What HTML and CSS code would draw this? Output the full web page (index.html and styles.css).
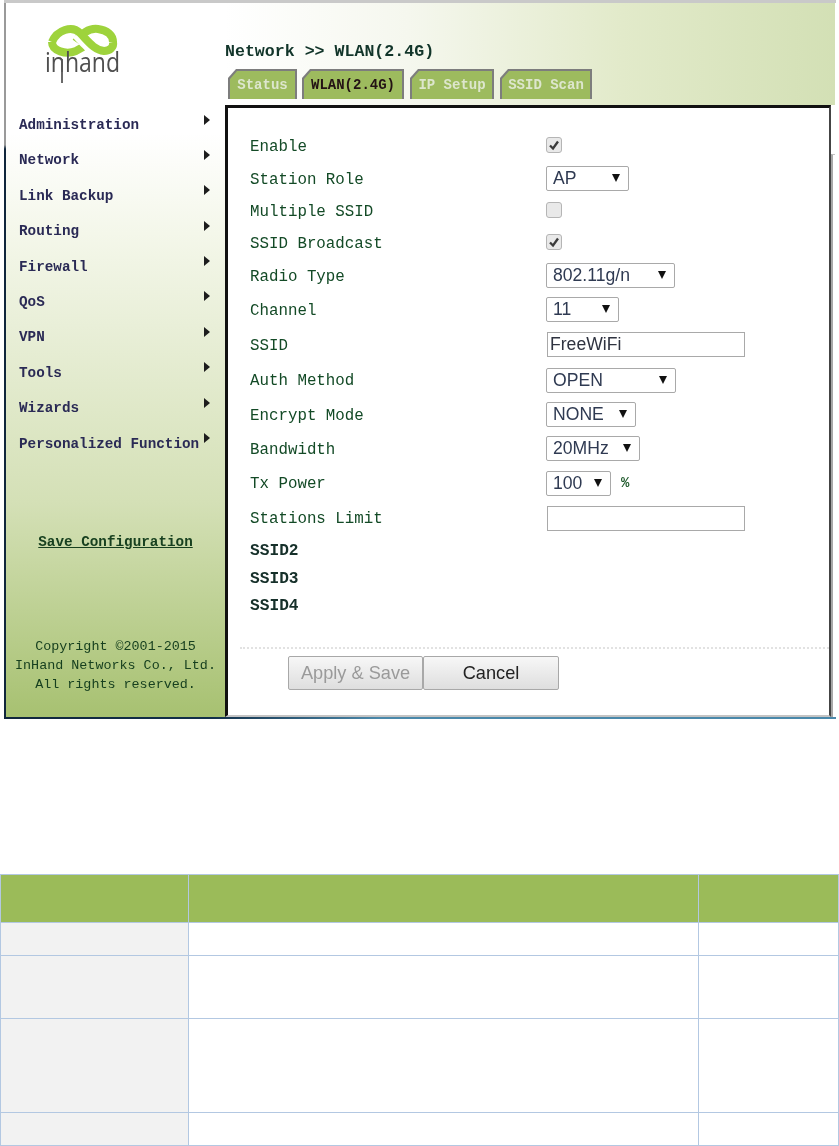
FILE: index.html
```html
<!DOCTYPE html>
<html lang="en">
<head>
<meta charset="utf-8">
<title>WLAN (2.4G)</title>
<link rel="stylesheet" href="styles.css">
</head>
<body>
<div class="frame">
  <aside class="side">
    <div class="logo">
      <svg class="logo-svg" viewBox="0 0 110 75" width="110" height="75">
        <path class="lg" d="M46 27C52 18 60 13 68 14C77 15 83 20 83 27"/>
        <path class="lg" d="M22 27C22 36 36 40 46 36L53 32"/>
        <path class="gap" d="M47 19C52 24 56 30 62 33"/>
        <path class="lg" d="M22 27C27 15 42 10 50 18C58 26 64 35 74 36C80 36 84 32 83 27"/>
        <text class="wordmark" x="15" y="57" textLength="75" lengthAdjust="spacingAndGlyphs">inhand</text>
        <path class="desc" d="M32 44V68"/>
      </svg>
    </div>
    <nav class="nav">
      <a class="nav-item">Administration<i class="tri"></i></a>
      <a class="nav-item">Network<i class="tri"></i></a>
      <a class="nav-item">Link Backup<i class="tri"></i></a>
      <a class="nav-item">Routing<i class="tri"></i></a>
      <a class="nav-item">Firewall<i class="tri"></i></a>
      <a class="nav-item">QoS<i class="tri"></i></a>
      <a class="nav-item">VPN<i class="tri"></i></a>
      <a class="nav-item">Tools<i class="tri"></i></a>
      <a class="nav-item">Wizards<i class="tri"></i></a>
      <a class="nav-item">Personalized Function<i class="tri"></i></a>
    </nav>
    <a class="save">Save Configuration</a>
    <p class="copy">Copyright ©2001-2015<br>InHand Networks Co., Ltd.<br>All rights reserved.</p>
  </aside>
  <div class="main">
    <header class="head">
      <h1 class="crumb">Network &gt;&gt; WLAN(2.4G)</h1>
      <div class="tabs">
        <div class="tab t-status"><span>Status</span></div>
        <div class="tab t-wlan on"><span>WLAN(2.4G)</span></div>
        <div class="tab t-ip"><span>IP Setup</span></div>
        <div class="tab t-scan"><span>SSID Scan</span></div>
      </div>
    </header>
    <div class="body-row">
      <section class="panel">
        <div class="form">
          <label class="lbl">Enable</label>
          <div class="ctl"><span class="cb"><svg viewBox="0 0 16 16" width="16" height="16"><path d="M4 8.5l3 3 5-7" class="ck"/></svg></span></div>
          <label class="lbl">Station Role</label>
          <div class="ctl"><span class="sel w83">AP<i class="dn"></i></span></div>
          <label class="lbl">Multiple SSID</label>
          <div class="ctl"><span class="cb"></span></div>
          <label class="lbl">SSID Broadcast</label>
          <div class="ctl"><span class="cb"><svg viewBox="0 0 16 16" width="16" height="16"><path d="M4 8.5l3 3 5-7" class="ck"/></svg></span></div>
          <label class="lbl">Radio Type</label>
          <div class="ctl"><span class="sel w129">802.11g/n<i class="dn"></i></span></div>
          <label class="lbl">Channel</label>
          <div class="ctl"><span class="sel w73">11<i class="dn"></i></span></div>
          <label class="lbl">SSID</label>
          <div class="ctl"><input class="txt" type="text" value="FreeWiFi"></div>
          <label class="lbl">Auth Method</label>
          <div class="ctl"><span class="sel w130">OPEN<i class="dn"></i></span></div>
          <label class="lbl">Encrypt Mode</label>
          <div class="ctl"><span class="sel w90">NONE<i class="dn"></i></span></div>
          <label class="lbl">Bandwidth</label>
          <div class="ctl"><span class="sel w94">20MHz<i class="dn"></i></span></div>
          <label class="lbl">Tx Power</label>
          <div class="ctl"><span class="sel w65">100<i class="dn"></i></span><span class="pct">%</span></div>
          <label class="lbl">Stations Limit</label>
          <div class="ctl"><input class="txt" type="text"></div>
          <b class="sub">SSID2</b><span></span>
          <b class="sub">SSID3</b><span></span>
          <b class="sub">SSID4</b><span></span>
        </div>
        <div class="actions">
          <button class="btn dim" type="button">Apply &amp; Save</button>
          <button class="btn" type="button">Cancel</button>
        </div>
      </section>
      <div class="edge"></div>
    </div>
  </div>
</div>
<table class="grid">
  <colgroup><col class="c1"><col class="c2"><col class="c3"></colgroup>
  <tr class="r-h"><td></td><td></td><td></td></tr>
  <tr class="r1"><td class="k"></td><td></td><td></td></tr>
  <tr class="r2"><td class="k"></td><td></td><td></td></tr>
  <tr class="r3"><td class="k"></td><td></td><td></td></tr>
  <tr class="r1"><td class="k"></td><td></td><td></td></tr>
</table>
</body>
</html>
```
FILE: styles.css
```css
* { box-sizing: border-box; }
html, body { margin: 0; padding: 0; background: #fff; }
body { width: 839px; height: 1146px; overflow: hidden; font-family: "Liberation Mono", monospace; }

.frame {
  display: flex;
  width: 832px;
  height: 719px;
  margin-left: 4px;
  padding: 0 0 2px 2px;
  border-top: 3px solid #c9c9c9;
  background:
    linear-gradient(90deg, #10263c 0, #12304a 25%, #4a88aa 45%, #4a88aa 100%) left bottom / 100% 2px no-repeat,
    linear-gradient(180deg, #9a9a9a 0, #9a9a9a 142px, #10263c 146px, #10263c 100%) left top / 2px 100% no-repeat,
    #fff;
  filter: blur(0.4px);
}

/* sidebar */
.side {
  flex: none;
  width: 219px;
  display: flex;
  flex-direction: column;
  background: linear-gradient(180deg, #fff 0, #fff 130px, #f4f7ea 230px, #d4e0b6 500px, #a7c171 714px);
}
.logo { height: 105px; }
.logo-svg { display: block; margin: 12px 0 0 24px; }
.lg { fill: none; stroke: #9ed33c; stroke-width: 8; }
.gap { fill: none; stroke: #fff; stroke-width: 11; }
.wordmark { font-family: "Open Sans", sans-serif; font-size: 27px; font-weight: 400; fill: #4f4f4f; }
.desc { stroke: #5a5a5a; stroke-width: 1.8; fill: none; }

.nav { display: flex; flex-direction: column; }
.nav-item {
  position: relative;
  display: block;
  height: 35.4px;
  line-height: 35.4px;
  padding-left: 13px;
  font-size: 14.3px;
  font-weight: 700;
  color: #2a2a55;
  white-space: nowrap;
}
.tri {
  position: absolute;
  left: 198px;
  top: 6.5px;
  width: 0;
  height: 0;
  border-left: 6px solid #1d1d1d;
  border-top: 5px solid transparent;
  border-bottom: 5px solid transparent;
}
.save {
  display: block;
  margin-top: 71px;
  text-align: center;
  font-size: 14.3px;
  line-height: 18px;
  font-weight: 700;
  color: #17401f;
  text-decoration: underline;
  white-space: nowrap;
}
.copy {
  margin: 86px 0 0;
  text-align: center;
  font-size: 13.4px;
  line-height: 19px;
  color: #17401f;
  white-space: nowrap;
}

/* main */
.main { flex: none; width: 610px; display: flex; flex-direction: column; }
.head {
  height: 102px;
  padding: 39px 0 0 0;
  background: linear-gradient(90deg, #fff 0, #f5f7ee 30%, #e2eaca 65%, #d3e0b5 100%);
}
.crumb {
  margin: 0;
  font-size: 16.6px;
  line-height: 20px;
  font-weight: 700;
  color: #12352a;
  white-space: nowrap;
  font-family: "Liberation Mono", monospace;
}
.tabs { display: flex; margin: 7px 0 0 3px; }
.tab {
  height: 30px;
  padding: 2px 2px 0;
  background: #7d7d7d;
  clip-path: polygon(8px 0, 100% 0, 100% 100%, 0 100%, 0 9px);
}
.tab span {
  display: flex;
  align-items: center;
  justify-content: center;
  height: 100%;
  background: #9dbb5e;
  clip-path: polygon(7px 0, 100% 0, 100% 100%, 0 100%, 0 8px);
  font-size: 14px;
  font-weight: 700;
  color: #dde6cd;
  white-space: nowrap;
}
.tab.on span { color: #231214; }
.t-status { width: 69px; margin-right: 5px; }
.t-wlan { width: 102px; margin-right: 6px; }
.t-ip { width: 84px; margin-right: 6px; }
.t-scan { width: 92px; }

.body-row { flex: 1; display: flex; min-height: 0; }
.panel {
  flex: none;
  width: 606px;
  background: #fff;
  border-top: 3px solid #111;
  border-left: 3px solid #111;
  border-right: 2px solid #444;
  border-bottom: 2px solid #c4c4c4;
  padding-top: 22px;
}
.edge {
  flex: 1;
  margin-top: 49px;
  border-left: 2px solid #a8a8a8;
  border-top: 1px solid #c4c4c4;
}

.form {
  display: grid;
  grid-template-columns: 296px 1fr;
  grid-template-rows: 33px 33px 32px 32px 33.5px 34.5px 35.5px 35px 34px 34px 35px 35px 29px 26.5px 27px;
  padding-left: 22px;
  align-items: center;
}
.lbl { font-size: 15.8px; color: #134a26; white-space: nowrap; }
.sub { font-size: 16.2px; font-weight: 700; color: #16302a; }
.ctl { display: flex; align-items: center; margin-top: -2px; font-family: "Liberation Sans", Arial, sans-serif; }
.cb {
  display: block;
  width: 16px;
  height: 16px;
  border: 1px solid #b5b5b5;
  border-radius: 3px;
  background: #e9e9e9;
  position: relative;
  top: -1px;
}
.cb svg { display: block; margin: -1px; }
.ck { fill: none; stroke: #3b3b3b; stroke-width: 2.3; }
.sel {
  position: relative;
  display: block;
  height: 25px;
  line-height: 23px;
  padding-left: 6px;
  border: 1px solid #a9a9a9;
  border-radius: 2px;
  background: #fff;
  font-size: 17.6px;
  color: #2f3a52;
  white-space: nowrap;
}
.dn {
  position: absolute;
  right: 8px;
  top: 7px;
  width: 0;
  height: 0;
  border-top: 8px solid #111;
  border-left: 4px solid transparent;
  border-right: 4px solid transparent;
}
.w65 { width: 65px; } .w73 { width: 73px; } .w83 { width: 83px; } .w90 { width: 90px; }
.w94 { width: 94px; } .w129 { width: 129px; } .w130 { width: 130px; }
.pct { margin-left: 10px; font-family: "Liberation Mono", monospace; font-size: 14px; font-weight: 700; color: #1f5a2c; }
.txt {
  display: block;
  width: 198px;
  height: 25px;
  margin: 0 0 0 1px;
  padding: 0 2px;
  border: 1px solid #a9a9a9;
  border-radius: 0;
  outline: 0;
  background: #fff;
  font-family: "Liberation Sans", Arial, sans-serif;
  font-size: 17.6px;
  color: #2f3340;
}

.actions {
  display: flex;
  margin: 28px 0 0 12px;
  padding: 7px 0 0 48px;
  border-top: 2px dotted #e2e2e2;
}
.btn {
  width: 136px;
  height: 34px;
  padding: 0;
  border: 1px solid #a8a8a8;
  border-radius: 2px;
  background: linear-gradient(180deg, #f7f7f7, #dedede);
  font-family: "Liberation Sans", Arial, sans-serif;
  font-size: 18.2px;
  color: #222;
}
.btn.dim { width: 135px; color: #9a9a9a; }

/* table */
.grid {
  border-collapse: collapse;
  table-layout: fixed;
  width: 838px;
  margin-top: 155px;
}
.grid td { border: 1px solid #b3c8e2; padding: 0; }
.c1 { width: 188px; } .c2 { width: 510px; } .c3 { width: 140px; }
.r-h { height: 48px; }
.r-h td { background: #9bbb59; }
.r1 { height: 33px; }
.r2 { height: 63px; }
.r3 { height: 94px; }
.k { background: #f2f2f2; }
```
